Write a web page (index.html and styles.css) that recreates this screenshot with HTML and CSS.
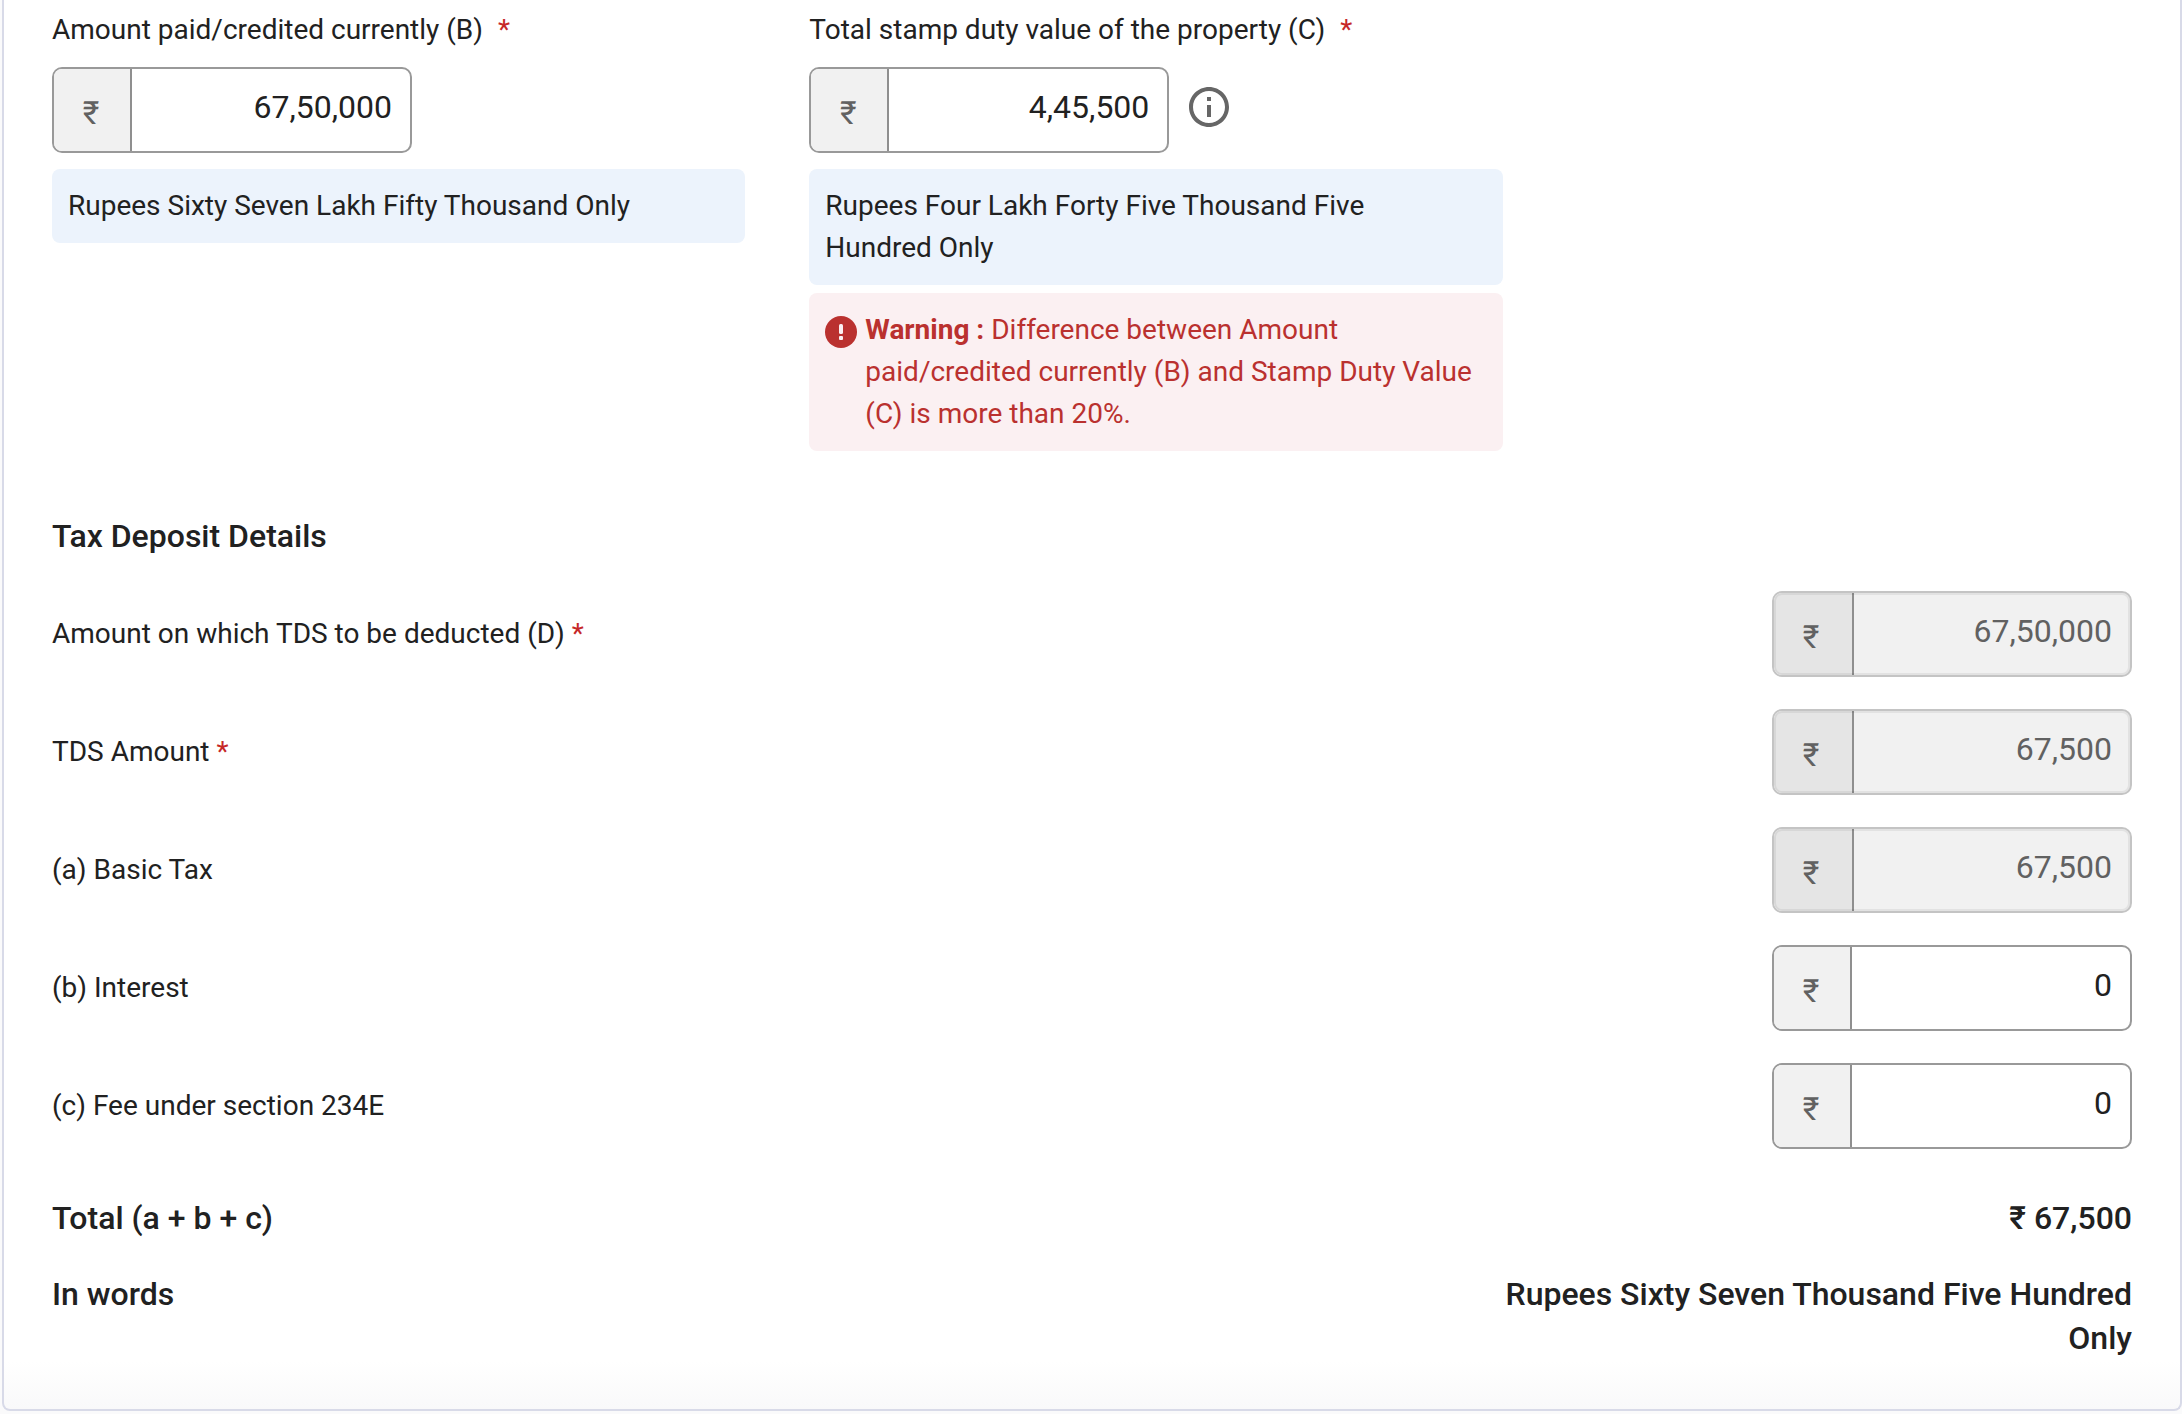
FILE: index.html
```html
<!DOCTYPE html>
<html lang="en">
<head>
<meta charset="utf-8">
<meta name="viewport" content="width=device-width, initial-scale=1">
<title>Tax Deposit Details</title>
<link rel="stylesheet" href="styles.css">
</head>
<body>
<main class="panel">
  <form class="form">
    <section class="fields">
      <div class="field">
        <label class="label" for="amount-paid">Amount paid/credited currently (B) <span class="required required-spaced">*</span></label>
        <div class="field-control">
          <div class="money">
            <span class="prefix">₹</span>
            <input class="amount" id="amount-paid" type="text" inputmode="numeric" value="67,50,000">
          </div>
        </div>
        <p class="note">Rupees Sixty Seven Lakh Fifty Thousand Only</p>
      </div>
      <div class="field">
        <label class="label" for="stamp-duty">Total stamp duty value of the property (C) <span class="required required-spaced">*</span></label>
        <div class="field-control">
          <div class="money">
            <span class="prefix">₹</span>
            <input class="amount" id="stamp-duty" type="text" inputmode="numeric" value="4,45,500">
          </div>
          <button class="info" type="button" aria-label="More information">
            <svg class="info-icon" viewBox="0 0 24 24" aria-hidden="true"><path fill="currentColor" d="M11 7h2v2h-2zm0 4h2v6h-2zm1-9C6.48 2 2 6.48 2 12s4.48 10 10 10 10-4.48 10-10S17.520 2 12 2zm0 18c-4.410 0-8-3.590-8-8s3.590-8 8-8 8 3.590 8 8-3.590 8-8 8z"/></svg>
          </button>
        </div>
        <p class="note">Rupees Four Lakh Forty Five Thousand Five Hundred Only</p>
        <div class="note warning" role="alert">
          <svg class="warning-icon" viewBox="0 0 32 32" aria-hidden="true"><circle cx="16" cy="16" r="16" fill="currentColor"/><rect x="14" y="8" width="4" height="10" rx="1.500" fill="#fbf0f2"/><rect x="14" y="20" width="4" height="4" rx="1" fill="#fbf0f2"/></svg>
          <p class="warning-text"><strong>Warning :</strong> Difference between Amount paid/credited currently (B) and Stamp Duty Value (C) is more than 20%.</p>
        </div>
      </div>
    </section>

    <h2 class="heading">Tax Deposit Details</h2>

    <section class="rows">
      <div class="row">
        <label class="label" for="tds-base">Amount on which TDS to be deducted (D) <span class="required">*</span></label>
        <div class="money money-disabled">
          <span class="prefix">₹</span>
          <input class="amount" id="tds-base" type="text" value="67,50,000" disabled>
        </div>
      </div>
      <div class="row">
        <label class="label" for="tds-amount">TDS Amount <span class="required">*</span></label>
        <div class="money money-disabled">
          <span class="prefix">₹</span>
          <input class="amount" id="tds-amount" type="text" value="67,500" disabled>
        </div>
      </div>
      <div class="row">
        <label class="label" for="basic-tax">(a) Basic Tax</label>
        <div class="money money-disabled">
          <span class="prefix">₹</span>
          <input class="amount" id="basic-tax" type="text" value="67,500" disabled>
        </div>
      </div>
      <div class="row">
        <label class="label" for="interest">(b) Interest</label>
        <div class="money">
          <span class="prefix">₹</span>
          <input class="amount" id="interest" type="text" inputmode="numeric" value="0">
        </div>
      </div>
      <div class="row">
        <label class="label" for="late-fee">(c) Fee under section 234E</label>
        <div class="money">
          <span class="prefix">₹</span>
          <input class="amount" id="late-fee" type="text" inputmode="numeric" value="0">
        </div>
      </div>
    </section>

    <dl class="summary">
      <div class="summary-row">
        <dt>Total (a + b + c)</dt>
        <dd>₹ 67,500</dd>
      </div>
      <div class="summary-row">
        <dt>In words</dt>
        <dd>Rupees Sixty Seven Thousand Five Hundred Only</dd>
      </div>
    </dl>
  </form>
</main>
</body>
</html>
```

FILE: styles.css
```css
* {
  box-sizing: border-box;
}

body {
  margin: 0;
  background: #fafafb;
  color: #212121;
  font-family: Roboto, "Liberation Sans", sans-serif;
  font-size: 28px;
  line-height: 42px;
}

p,
h2,
dl,
dd {
  margin: 0;
}

.panel {
  margin-left: 2px;
  padding: 9px 48px 49px;
  border: 2px solid #d8dae8;
  border-top: 0;
  border-radius: 0 0 8px 8px;
  background: linear-gradient(to top, #f9f9fa, #fff 48px);
}

.fields {
  display: flex;
  gap: 64px;
}

.field {
  display: flex;
  flex: 0 0 calc(100% / 3);
  flex-direction: column;
}

.label {
  display: block;
}

.required {
  color: #c62828;
}

.required-spaced {
  margin-left: 8px;
}

.field-control {
  display: flex;
  align-items: center;
  gap: 16px;
  margin: 16px 0;
}

.money {
  display: flex;
  flex: none;
  width: 360px;
  height: 86px;
  overflow: hidden;
  border: 2px solid #999;
  border-radius: 10px;
  background: #fff;
}

.prefix {
  display: flex;
  flex: none;
  align-items: center;
  justify-content: center;
  width: 78px;
  padding: 6px 2px 0 0;
  border-right: 2px solid #8f8f8f;
  background: #f1f1f1;
  color: #616161;
  font-size: 32px;
}

.amount {
  flex: 1;
  min-width: 0;
  padding: 0 18px 6px;
  border: 0;
  background: transparent;
  color: #212121;
  font: inherit;
  font-size: 32px;
  text-align: right;
}

.money-disabled {
  position: relative;
  border-color: #c4c4c4;
  background: #f1f1f1;
}

.money-disabled::after {
  position: absolute;
  inset: 0;
  border: 2px solid rgba(0, 0, 0, 0.06);
  border-radius: 8px;
  content: "";
  pointer-events: none;
}

.money-disabled .prefix {
  width: 80px;
  padding-right: 4px;
  background: #e5e5e5;
}

.money-disabled .amount {
  color: #616161;
}

.info {
  display: flex;
  padding: 0 0 6px;
  border: 0;
  background: none;
  color: #666;
}

.info-icon {
  width: 48px;
  height: 48px;
}

.note {
  padding: 16px 32px 16px 16px;
  border-radius: 8px;
  background: #ecf3fc;
}

.warning {
  display: flex;
  gap: 8px;
  margin-top: 8px;
  padding-right: 16px;
  background: #fbf0f2;
  color: #ba312f;
}

.warning-icon {
  flex: none;
  width: 32px;
  height: 32px;
  margin-top: 7px;
}

.warning strong {
  font-weight: 700;
}

.heading {
  margin: 63px 0 33px;
  font-size: 32px;
  font-weight: 500;
  line-height: 44px;
}

.rows {
  display: grid;
  gap: 32px;
}

.row {
  display: flex;
  align-items: center;
  justify-content: space-between;
}

.summary {
  display: grid;
  gap: 32px;
  margin-top: 47px;
  font-size: 32px;
  font-weight: 500;
  line-height: 44px;
}

.summary-row {
  display: flex;
  justify-content: space-between;
}

.summary-row dd {
  flex: 0 0 calc(100% / 3);
  text-align: right;
}
```
